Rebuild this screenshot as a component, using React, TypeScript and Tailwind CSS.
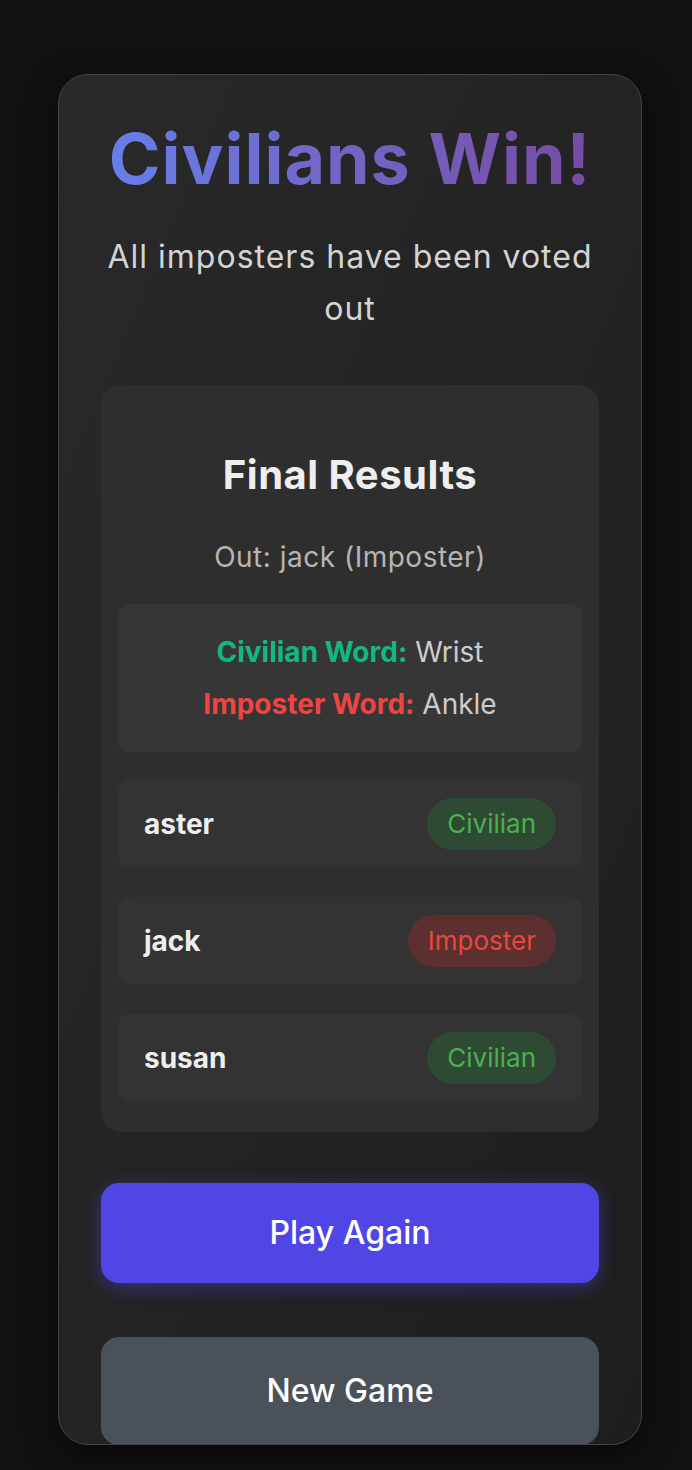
const font = "font-['Inter','Noto_Sans',sans-serif]";

type Role = "Civilian" | "Imposter";

const players: { name: string; role: Role }[] = [
  { name: "aster", role: "Civilian" },
  { name: "jack", role: "Imposter" },
  { name: "susan", role: "Civilian" },
];

export default function App() {
  return (
    <div className={`min-h-[1470px] bg-[#111111] ${font}`}>
      <div className="pl-[58px] pt-[74px]">
        <div className="h-[1371px] w-[584px] overflow-hidden rounded-[30px] border border-[#444444] bg-gradient-to-br from-[#292929] to-[#1e1e1e] px-[42px] pt-[46px] text-center shadow-[0_10px_30px_rgba(0,0,0,0.5)]">
          <h1 className="bg-gradient-to-r from-[#667eea] to-[#764ba2] bg-clip-text text-[70px] font-bold leading-[76px] tracking-[1px] text-transparent">
            Civilians Win!
          </h1>
          <p className="mt-[34px] text-[32px] leading-[52px] tracking-[1px] text-[#d4d4d4]">
            All imposters have been voted out
          </p>

          <div className="mt-[50px] rounded-[20px] bg-[#2e2e2e] px-[17px] pb-[31px] pt-[66px]">
            <h2 className="text-[40px] font-bold leading-[48px] tracking-[0.5px] text-[#eeeeee]">Final Results</h2>
            <p className="mt-[40px] text-[28px] leading-[36px] tracking-[0.5px] text-[#b5b5b5]">Out: jack (Imposter)</p>

            <div className="mt-[29px] rounded-[12px] bg-[#363636] py-[22px] text-[28px] leading-[52px]">
              <p>
                <span className="font-bold text-[#10b981]">Civilian Word:</span>{" "}
                <span className="text-[#cccccc]">Wrist</span>
              </p>
              <p>
                <span className="font-bold text-[#ef4444]">Imposter Word:</span>{" "}
                <span className="text-[#cccccc]">Ankle</span>
              </p>
            </div>

            <div className="mt-[28px] flex flex-col gap-[30px]">
              {players.map((p) => (
                <PlayerRow key={p.name} name={p.name} role={p.role} />
              ))}
            </div>
          </div>

          <button className="mt-[51px] h-[100px] w-full rounded-[18px] bg-[#4f46e5] text-[32px] font-medium text-white shadow-[0_4px_18px_rgba(79,70,229,0.45)]">
            Play Again
          </button>
          {/* runs past the card's bottom edge, card clips it */}
          <button className="mt-[54px] h-[108px] w-full rounded-[18px] bg-[#4b5159] text-[32px] font-medium text-white">
            New Game
          </button>
        </div>
      </div>
    </div>
  );
}

function PlayerRow({ name, role }: { name: string; role: Role }) {
  const civ = role === "Civilian";
  return (
    <div className="flex h-[87px] items-center justify-between rounded-[12px] bg-[#333333] px-[26px]">
      <span className="text-[28px] font-bold text-[#eeeeee]">{name}</span>
      <span
        className={
          civ
            ? "flex h-[52px] items-center rounded-full bg-[#2f4a33] px-[20px] text-[26px] text-[#4caf50]"
            : "flex h-[52px] items-center rounded-full bg-[#5b302e] px-[20px] text-[26px] text-[#ea463d]"
        }
      >
        {role}
      </span>
    </div>
  );
}
